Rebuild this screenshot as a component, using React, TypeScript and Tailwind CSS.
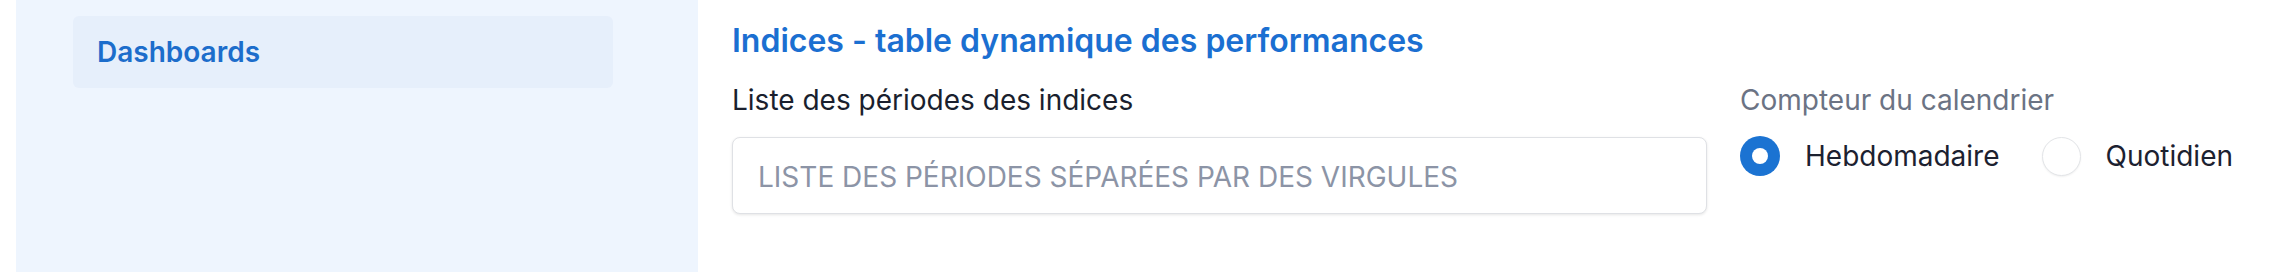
import React from "react";

export default function App() {
  const font = { fontFamily: "Inter, 'Liberation Sans', sans-serif" };
  return (
    <div className="flex h-[272px] w-[2286px] bg-white overflow-hidden" style={font}>
      <div className="w-[16px] shrink-0 bg-white" />
      <aside className="w-[682px] shrink-0 bg-[#eef5fe] pt-[16px] pl-[57px]">
        <div className="flex h-[72px] w-[540px] items-center rounded-[6px] bg-[#e6effb] pl-[24px]">
          <span className="text-[28px] font-semibold leading-none text-[#1c6dcb]">Dashboards</span>
        </div>
      </aside>
      <main className="flex-1 pl-[34px] pt-[18px]">
        <h1 className="text-[32px] font-semibold leading-[45px] text-[#1b6fd1]">
          Indices - table dynamique des performances
        </h1>
        <div className="mt-[17px] flex gap-[33px]">
          <div className="flex w-[975px] flex-col gap-[17px]">
            <label className="text-[28px] font-normal leading-[40px] text-[#1a1f2e]">
              Liste des périodes des indices
            </label>
            <input
              type="text"
              placeholder="LISTE DES PÉRIODES SÉPARÉES PAR DES VIRGULES"
              className="h-[77px] w-full rounded-[8px] border border-[#dfe1e5] bg-white px-[25px] pt-[3px] text-[28px] text-[#1a1f2e] shadow-[0_1px_3px_rgba(0,0,0,0.1)] outline-none placeholder:text-[#8c94a6]"
              style={font}
            />
          </div>
          <div className="flex flex-col gap-[16px]">
            <span className="text-[28px] leading-[40px] text-[#6b7384]">Compteur du calendrier</span>
            <div className="flex h-[40px] items-center">
              <span className="flex h-[40px] w-[40px] items-center justify-center rounded-full bg-[#1b73d2]">
                <span className="h-[16px] w-[16px] rounded-full bg-white" />
              </span>
              <span className="ml-[25px] text-[28px] leading-none text-[#1c2130]">Hebdomadaire</span>
              <span className="ml-[42px] h-[39px] w-[39px] rounded-full border border-[#e3e5e8] bg-white shadow-[0_1px_2px_rgba(0,0,0,0.06)]" />
              <span className="ml-[25px] text-[28px] leading-none text-[#1c2130]">Quotidien</span>
            </div>
          </div>
        </div>
      </main>
    </div>
  );
}
